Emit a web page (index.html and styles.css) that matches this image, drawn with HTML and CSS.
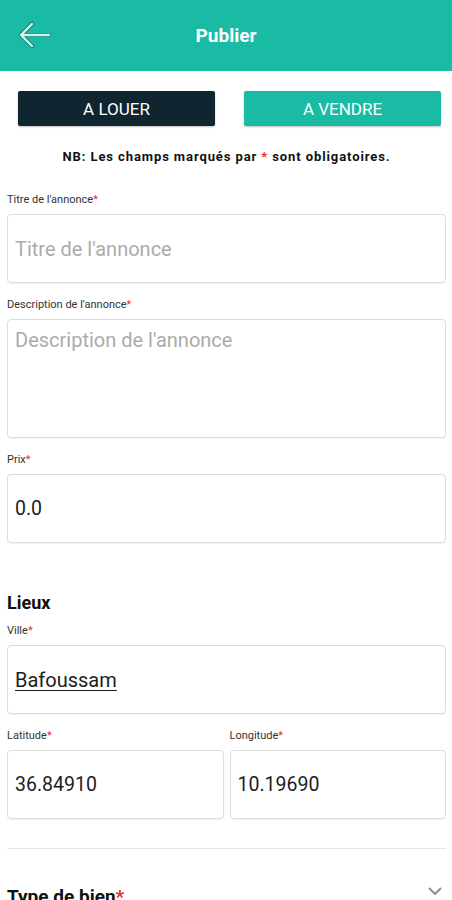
FILE: index.html
```html
<!DOCTYPE html>
<html lang="fr">
<head>
<meta charset="utf-8">
<title>Publier</title>
<link rel="stylesheet" href="styles.css">
</head>
<body>
<header class="appbar">
  <svg class="back" width="34" height="32" viewBox="0 0 34 32" aria-hidden="true">
    <g fill="none" stroke-linecap="round" stroke-linejoin="round">
      <path d="M31 15H3M14 4L3 15l11 11" stroke="#0f8272" stroke-width="4.2"/>
      <path d="M31 15H3M14 4L3 15l11 11" stroke="#d3f3ec" stroke-width="2.4"/>
    </g>
  </svg>
  <h1 class="title">Publier</h1>
</header>
<main class="page">
  <div class="toggle">
    <button class="btn btn-dark">A LOUER</button>
    <button class="btn btn-teal">A VENDRE</button>
  </div>
  <p class="note">NB: Les champs marqués par <span class="req">*</span> sont obligatoires.</p>

  <div class="field field-first">
    <label class="label">Titre de l'annonce<span class="req">*</span></label>
    <div class="box"><span class="placeholder">Titre de l'annonce</span></div>
  </div>
  <div class="field">
    <label class="label">Description de l'annonce<span class="req">*</span></label>
    <div class="box box-area"><span class="placeholder">Description de l'annonce</span></div>
  </div>
  <div class="field">
    <label class="label">Prix<span class="req">*</span></label>
    <div class="box"><span class="value">0.0</span></div>
  </div>

  <h2 class="section">Lieux</h2>
  <div class="field field-tight">
    <label class="label">Ville<span class="req">*</span></label>
    <div class="box"><span class="value text underline">Bafoussam</span></div>
  </div>
  <div class="row">
    <div class="field">
      <label class="label">Latitude<span class="req">*</span></label>
      <div class="box"><span class="value">36.84910</span></div>
    </div>
    <div class="field">
      <label class="label">Longitude<span class="req">*</span></label>
      <div class="box"><span class="value">10.19690</span></div>
    </div>
  </div>
  <hr class="divider">
  <div class="type-row">
    <span class="type-title">Type de bien<span class="req">*</span></span>
    <svg class="chev" width="14" height="9" viewBox="0 0 14 9" aria-hidden="true">
      <path d="M1.5 1.5L7 7l5.5-5.5" fill="none" stroke="#8a8a8a" stroke-width="1.8" stroke-linecap="round" stroke-linejoin="round"/>
    </svg>
  </div>
</main>
</body>
</html>
```
FILE: styles.css
```css
* { box-sizing: border-box; }
html, body { margin: 0; padding: 0; }
body {
  width: 452px;
  height: 900px;
  overflow: hidden;
  background: #fff;
  font-family: Roboto, "Liberation Sans", Arial, sans-serif;
  color: #1d1d1d;
}
.appbar {
  height: 71px;
  background: #19bba4;
  display: flex;
  align-items: center;
  justify-content: center;
  position: relative;
}
.back {
  position: absolute;
  left: 18px;
  top: 20px;
}
.title {
  margin: 0;
  color: #fff;
  font-size: 19px;
  font-weight: 700;
}
.page {
  padding: 0 6px 0 7px;
}
.toggle {
  display: flex;
  gap: 29px;
  padding: 20px 4px 0 11px;
}
.btn {
  width: 197px;
  height: 35px;
  border: none;
  border-radius: 2px;
  color: #fff;
  font-family: Roboto, "Liberation Sans", Arial, sans-serif;
  font-size: 17px;
  font-weight: 400;
  padding: 0;
  box-shadow: 0 1px 2px rgba(0,0,0,0.25);
}
.btn-dark { background: #0f2530; }
.btn-teal { background: #19bba4; }
.note {
  margin: 23px 0 0 0;
  text-align: center;
  font-size: 13px;
  font-weight: 700;
  letter-spacing: 0.9px;
  line-height: 16px;
  color: #111;
}
.req { color: #e52b2b; }
.field {
  display: flex;
  flex-direction: column;
  margin-top: 14px;
}
.field-first { margin-top: 27px; }
.label {
  font-size: 11px;
  line-height: 16px;
  color: #333;
  margin-bottom: 6px;
}
.box {
  height: 69px;
  border: 1.5px solid #dcdcdc;
  border-radius: 4px;
  display: flex;
  align-items: center;
  padding: 0 7px;
  font-size: 19.5px;
  box-shadow: 0 1px 1px rgba(0,0,0,0.06);
}
.box-area {
  height: 119px;
  align-items: flex-start;
  padding-top: 8px;
}
.placeholder { color: #ababab; font-size: 20px; }
.value { color: #1d1d1d; }
.text { font-size: 20px; }
.underline { text-decoration: underline; text-underline-offset: 3px; text-decoration-thickness: 1px; }
.section {
  margin: 48px 0 0 0;
  font-size: 18px;
  font-weight: 700;
  line-height: 24px;
  color: #111;
}
.field-tight { margin-top: 8px; }
.row {
  display: grid;
  grid-template-columns: 1fr 1fr;
  gap: 6px;
}
.divider {
  margin: 29px 0 0 0;
  border: none;
  border-top: 1px solid #e6e6e6;
}
.type-row {
  display: flex;
  align-items: flex-start;
  justify-content: space-between;
  margin-top: 36px;
  padding-right: 4px;
}
.type-title {
  font-size: 19px;
  line-height: 24px;
  font-weight: 700;
  color: #111;
}
.chev { margin-top: 2px; }
```
